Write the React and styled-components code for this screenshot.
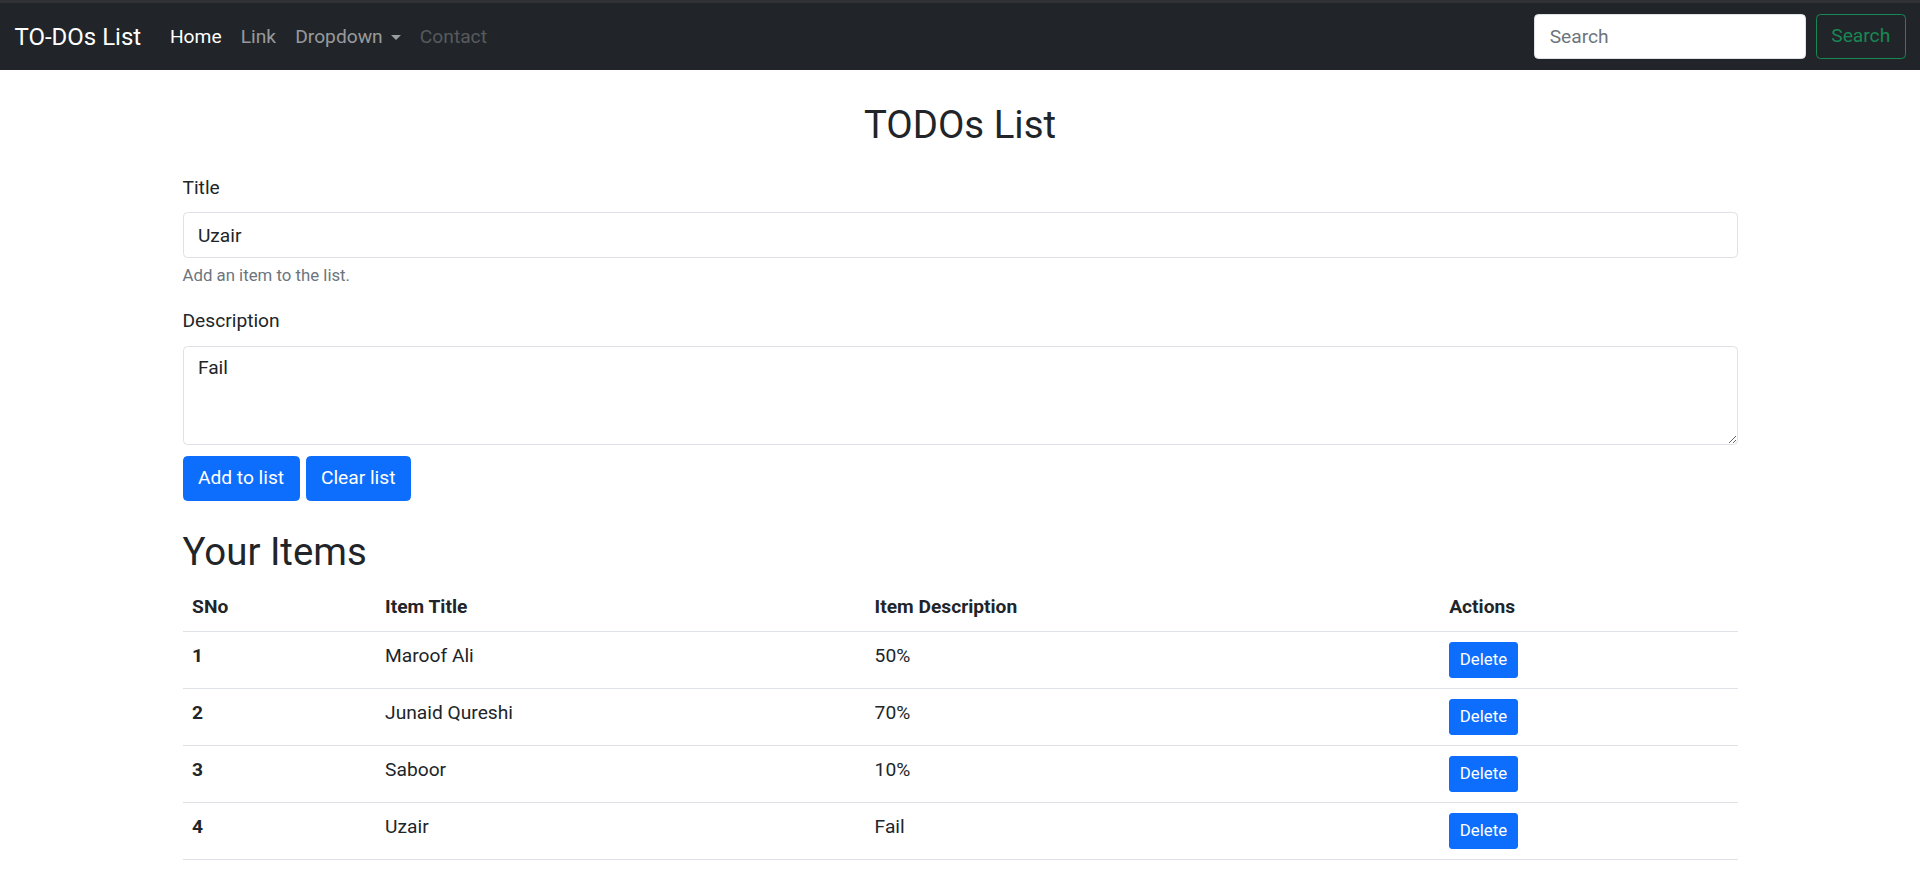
import React from "react";
import styled, { createGlobalStyle } from "styled-components";

const GlobalStyle = createGlobalStyle`
  * { box-sizing: border-box; }
  body {
    margin: 0;
    font-family: Roboto, "Noto Sans", sans-serif;
    font-size: 19.2px;
    line-height: 1.5;
    color: #212529;
    background: #fff;
  }
`;

const Navbar = styled.nav`
  display: flex;
  align-items: center;
  justify-content: space-between;
  height: 70px;
  padding: 0 14.4px;
  background: #212529;
  border-top: 3px solid #2f3134;
`;

const NavLeft = styled.div`
  display: flex;
  align-items: center;
  padding-top: 2px;
`;

const Brand = styled.a`
  color: #fff;
  font-size: 24px;
  margin-right: 19.2px;
  text-decoration: none;
`;

const NavLink = styled.a`
  display: flex;
  align-items: center;
  padding: 9.6px;
  text-decoration: none;
  color: ${(p) =>
    p.$active ? "#fff" : p.$disabled ? "rgba(255,255,255,.25)" : "rgba(255,255,255,.55)"};
`;

const Caret = styled.span`
  display: inline-block;
  margin-left: 8px;
  border-top: 5.5px solid currentColor;
  border-left: 5px solid transparent;
  border-right: 5px solid transparent;
`;

const SearchForm = styled.form`
  display: flex;
  align-items: center;
  gap: 9.6px;
`;

const SearchInput = styled.input`
  width: 272px;
  height: 45.6px;
  padding: 7.2px 14.4px;
  border: 1px solid #dee2e6;
  border-radius: 4.5px;
  font: inherit;
  color: #212529;
  &::placeholder { color: #6c757d; }
`;

const OutlineButton = styled.button`
  height: 45.6px;
  padding: 7.2px 14.4px;
  border: 1px solid #198754;
  border-radius: 4.5px;
  background: transparent;
  color: #198754;
  font: inherit;
`;

const Container = styled.main`
  width: 1555px;
  margin: 0 auto;
  padding-top: 32px;
`;

const PageTitle = styled.h2`
  margin: 0 0 26px;
  font-size: 38.4px;
  font-weight: 400;
  line-height: 1.2;
  text-align: center;
`;

const Field = styled.div`
  margin-bottom: 19.2px;
`;

const Label = styled.label`
  display: block;
  margin-bottom: 9.6px;
`;

const Input = styled.input`
  display: block;
  width: 100%;
  height: 45.6px;
  padding: 7.2px 14.4px;
  border: 1px solid #dee2e6;
  border-radius: 4.5px;
  font: inherit;
  color: #212529;
`;

const TextArea = styled.textarea`
  display: block;
  width: 100%;
  height: 99px;
  padding: 7.2px 14.4px;
  border: 1px solid #dee2e6;
  border-radius: 4.5px;
  font: inherit;
  color: #212529;
  resize: vertical;
`;

const Help = styled.div`
  margin-top: 4.8px;
  font-size: 16.8px;
  color: #6c757d;
`;

const ButtonRow = styled.div`
  display: flex;
  gap: 6px;
  margin-top: -8px;
`;

const PrimaryButton = styled.button`
  padding: ${(p) => (p.$small ? "4.8px 9.6px" : "7.2px 14.4px")};
  font-family: inherit;
  font-size: ${(p) => (p.$small ? "16.8px" : "19.2px")};
  line-height: 1.5;
  color: #fff;
  background: #0d6efd;
  border: 1px solid #0d6efd;
  border-radius: ${(p) => (p.$small ? "3px" : "4.5px")};
`;

const SectionTitle = styled.h2`
  margin: 28px 0 8px;
  font-size: 38.4px;
  font-weight: 400;
  line-height: 1.2;
`;

const Table = styled.table`
  width: 100%;
  border-collapse: collapse;
  table-layout: fixed;
`;

const Cell = styled.td`
  padding: 9.6px;
  text-align: left;
  vertical-align: top;
  border-bottom: 1px solid #dee2e6;
  font-weight: ${(p) => (p.$bold ? 700 : 400)};
`;

const items = [
  { title: "Maroof Ali", desc: "50%" },
  { title: "Junaid Qureshi", desc: "70%" },
  { title: "Saboor", desc: "10%" },
  { title: "Uzair", desc: "Fail" },
];

export default function App() {
  return (
    <>
      <GlobalStyle />
      <Navbar>
        <NavLeft>
          <Brand href="#">TO-DOs List</Brand>
          <NavLink $active href="#">Home</NavLink>
          <NavLink href="#">Link</NavLink>
          <NavLink href="#">
            Dropdown
            <Caret />
          </NavLink>
          <NavLink $disabled>Contact</NavLink>
        </NavLeft>
        <SearchForm onSubmit={(e) => e.preventDefault()}>
          <SearchInput placeholder="Search" />
          <OutlineButton>Search</OutlineButton>
        </SearchForm>
      </Navbar>

      <Container>
        <PageTitle>TODOs List</PageTitle>
        <Field>
          <Label>Title</Label>
          <Input defaultValue="Uzair" />
          <Help>Add an item to the list.</Help>
        </Field>
        <Field>
          <Label>Description</Label>
          <TextArea defaultValue="Fail" />
        </Field>
        <ButtonRow>
          <PrimaryButton>Add to list</PrimaryButton>
          <PrimaryButton>Clear list</PrimaryButton>
        </ButtonRow>

        <SectionTitle>Your Items</SectionTitle>
        <Table>
          <colgroup>
            <col style={{ width: "193px" }} />
            <col style={{ width: "489.5px" }} />
            <col style={{ width: "574.6px" }} />
            <col />
          </colgroup>
          <thead>
            <tr>
              <Cell as="th" $bold>SNo</Cell>
              <Cell as="th" $bold>Item Title</Cell>
              <Cell as="th" $bold>Item Description</Cell>
              <Cell as="th" $bold>Actions</Cell>
            </tr>
          </thead>
          <tbody>
            {items.map((it, i) => (
              <tr key={i}>
                <Cell as="th" $bold>{i + 1}</Cell>
                <Cell>{it.title}</Cell>
                <Cell>{it.desc}</Cell>
                <Cell>
                  <PrimaryButton $small>Delete</PrimaryButton>
                </Cell>
              </tr>
            ))}
          </tbody>
        </Table>
      </Container>
    </>
  );
}
